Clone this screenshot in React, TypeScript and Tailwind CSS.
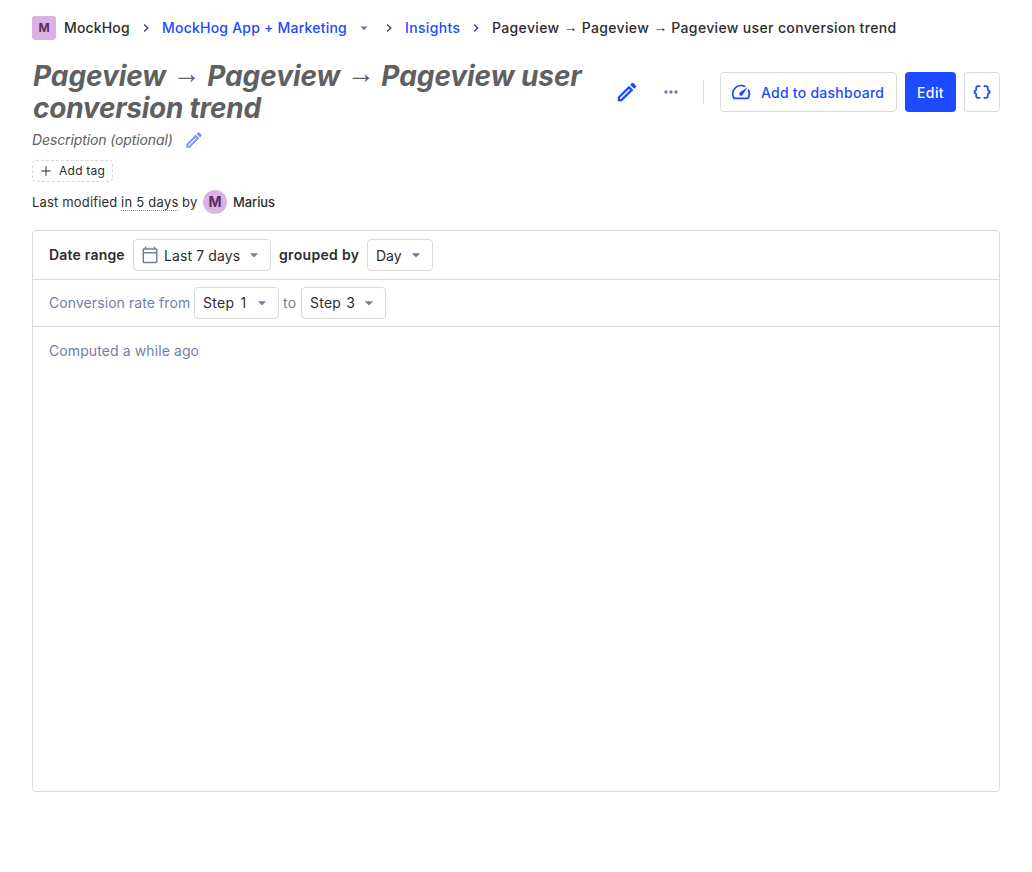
import React from 'react';
import {
  MdArrowDropDown,
  MdChevronRight,
  MdDataObject,
  MdOutlineCalendarToday,
  MdOutlineSpeed,
  MdMoreHoriz,
} from 'react-icons/md';

function Separator() {
  return <MdChevronRight className="mx-2 size-4 shrink-0 text-[#35416b]" />;
}

function Pencil({ className }: { className: string }) {
  return (
    <svg viewBox="0 0 24 24" fill="currentColor" className={className}>
      <path
        fillRule="evenodd"
        d="M2.8 17.1V21.2h4.1L18.3 9.94l-4.24-4.24L2.8 17.1zM5.9 19.1H4.9v-1l9.16-9.16 1 1L5.9 19.1z"
      />
      <path d="M20.91 7.14a1.1 1.1 0 0 0 0-1.51l-2.54-2.54a1.1 1.1 0 0 0-1.51 0l-1.73 1.73 4.05 4.05 1.73-1.73z" />
    </svg>
  );
}

function Arrow() {
  return (
    <span className="relative -top-[0.09em] font-['Liberation_Sans',sans-serif] leading-none font-normal tracking-normal not-italic">
      →
    </span>
  );
}

function Select({ width, icon, children }: { width: string; icon?: React.ReactNode; children: React.ReactNode }) {
  return (
    <button className={`flex h-8 shrink-0 items-center rounded border border-[#d9d9d9] bg-white pl-2 ${width}`}>
      {icon}
      <span className="whitespace-nowrap">{children}</span>
      <MdArrowDropDown className="mr-1.5 ml-auto size-5 text-[#747ea2]" />
    </button>
  );
}

export default function App() {
  return (
    <div className="h-[872px] bg-white px-8 pt-4 font-['Inter',sans-serif] text-sm text-[#2d2d2d]">
      <nav className="flex h-6 items-center font-medium whitespace-nowrap">
        <span className="mr-2 flex size-6 items-center justify-center rounded-[3px] bg-[#dcb1e3] text-xs font-bold text-[#572e5e]">M</span>
        <span className="w-[66px] tracking-[0.15px]">MockHog</span>
        <Separator />
        <span className="w-[185px] tracking-[0.22px] text-[#1d4aff]">MockHog App + Marketing</span>
        <MdArrowDropDown className="ml-2 size-[18px] text-[#747ea2]" />
        <Separator />
        <span className="w-[55px] tracking-[0.35px] text-[#1d4aff]">Insights</span>
        <Separator />
        <span className="tracking-[0.35px]">
          Pageview <Arrow /> Pageview <Arrow /> Pageview user conversion trend
        </span>
      </nav>

      <header className="mt-5 flex h-16 items-center">
        <h1 className="w-[570px] pl-px text-[28px] leading-8 font-bold tracking-[-0.07px] text-[#606060] italic">
          Pageview <Arrow /> Pageview <Arrow /> Pageview user{' '}
          <span className="tracking-[-0.25px]">conversion trend</span>
        </h1>
        <Pencil className="ml-[13px] size-6 text-[#1d4aff]" />
        <MdMoreHoriz className="ml-[22px] size-5 text-[#747ea2]" />
        <div className="ml-[22px] h-6 w-px bg-[#d9d9d9]" />
        <div className="ml-auto flex gap-2 font-medium">
          <button className="flex h-10 w-[177px] items-center rounded border border-[#d9d9d9] pl-[9px] whitespace-nowrap text-[#1d4aff]">
            <MdOutlineSpeed className="mr-[9px] size-[22px]" />
            <span className="pt-0.5 tracking-[0.25px]">Add to dashboard</span>
          </button>
          <button className="flex h-10 w-[51px] items-center justify-center rounded bg-[#1d4aff] pt-0.5 tracking-[0.4px] text-white">Edit</button>
          <button className="flex h-10 w-9 items-center justify-center rounded border border-[#d9d9d9] text-[#1d4aff]">
            <MdDataObject className="size-5" />
          </button>
        </div>
      </header>

      <div className="mt-1 flex h-6 items-center">
        <span className="w-[140px] tracking-[-0.12px] whitespace-nowrap text-[#606060] italic">Description (optional)</span>
        <Pencil className="ml-3 size-5 text-[#1d4aff] opacity-60" />
      </div>
      <button className="mt-2 flex h-[22px] w-[81px] items-center rounded border border-dashed border-[#d9d9d9] pl-2 text-xs tracking-[0.25px] whitespace-nowrap">
        <svg viewBox="0 0 10 10" className="mr-2 size-2.5" stroke="currentColor" strokeWidth="1">
          <path d="M5 0.3v9.4M0.3 5h9.4" />
        </svg>
        Add tag
      </button>
      <div className="mt-2 flex h-6 items-center text-[13px] whitespace-nowrap">
        <span className="w-[89px] tracking-[0.17px]">Last modified</span>
        <span className="w-[57px] border-b border-dotted border-[#909090] leading-4 tracking-[0.26px]">in 5 days</span>
        <span className="ml-1 w-[15px] tracking-[0.3px]">by</span>
        <span className="mx-1.5 flex size-6 items-center justify-center rounded-full bg-[#dcb1e3] text-sm font-bold text-[#572e5e]">M</span>
        <span className="font-medium tracking-[-0.1px]">Marius</span>
      </div>

      <main className="mt-4 h-[562px] rounded border border-[#d9d9d9]">
        <div className="flex h-[49px] items-center gap-2 border-b border-[#d9d9d9] px-4 whitespace-nowrap">
          <span className="w-[76px] font-semibold tracking-[0.2px]">Date range</span>
          <Select width="w-[138px]" icon={<MdOutlineCalendarToday className="mr-[5px] -ml-px size-[18px] text-[#747ea2]" />}>
            <span className="relative top-px tracking-[0.1px]">Last 7 days</span>
          </Select>
          <span className="w-20 font-semibold tracking-[0.33px]">grouped by</span>
          <Select width="w-[66px]">
            <span className="relative top-px">Day</span>
          </Select>
        </div>
        <div className="flex h-[47px] items-center gap-1 border-b border-[#d9d9d9] px-4 whitespace-nowrap text-[#747ea2]">
          <span className="w-[141px] tracking-[0.08px]">Conversion rate from</span>
          <Select width="w-[85px] text-[#2d2d2d]">
            <span className="tracking-[0.3px] [word-spacing:2px]">Step 1</span>
          </Select>
          <span className="w-3.5 tracking-[0.4px]">to</span>
          <Select width="w-[85px] text-[#2d2d2d]">
            <span className="tracking-[0.25px] [word-spacing:1px]">Step 3</span>
          </Select>
        </div>
        <div className="flex h-12 items-center px-4 tracking-[0.1px] text-[#747ea2]">Computed a while ago</div>
      </main>
    </div>
  );
}
